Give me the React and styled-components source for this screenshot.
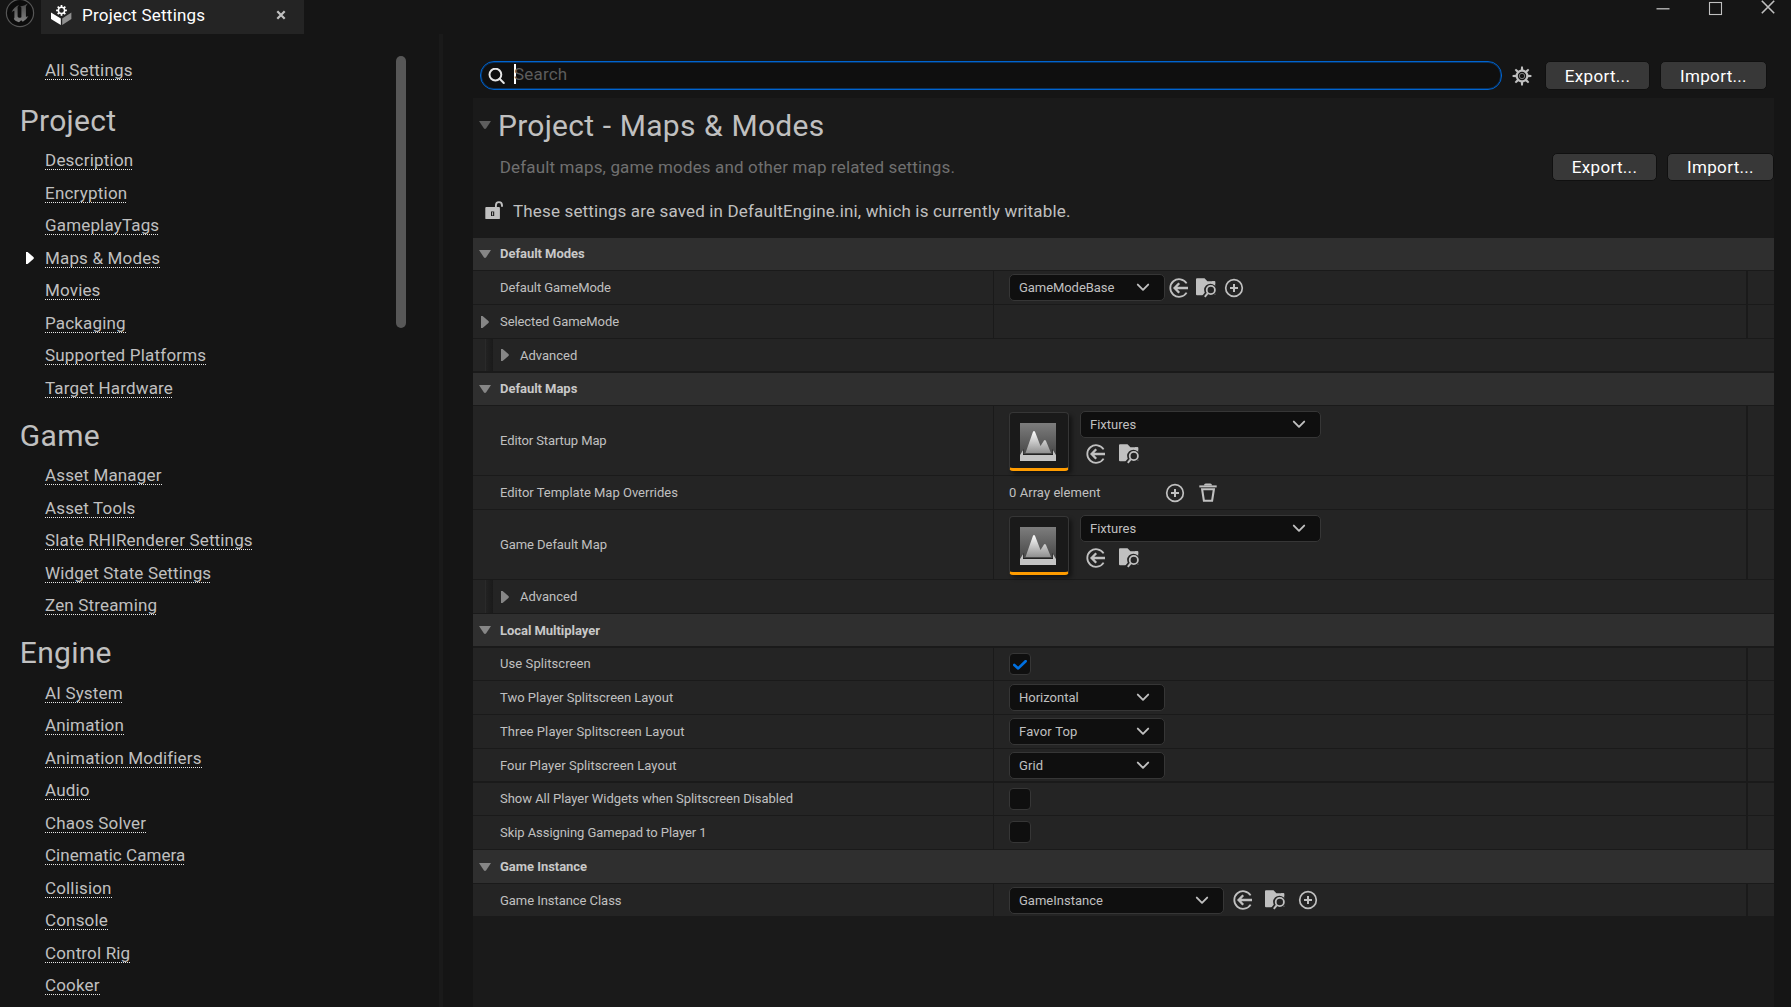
import React from "react";
import styled, { createGlobalStyle } from "styled-components";

const Global = createGlobalStyle`
  html, body { margin: 0; padding: 0; background: #151515; }
  body { overflow: hidden; font-family: Roboto, "Liberation Sans", sans-serif; color: #c0c0c0; }
  *, *::before, *::after { box-sizing: border-box; }
  svg { display: block; flex: none; }
`;

const Window = styled.div`
  display: flex;
  flex-direction: column;
  width: 1791px;
  height: 1007px;
  background: #151515;
  overflow: hidden;
`;

/* ---------- title bar ---------- */

const TitleBar = styled.header`
  display: flex;
  flex: none;
  height: 34px;
`;

const LogoSlot = styled.div`
  width: 41px;
  padding: 0 0 0 5px;
  overflow: hidden;
`;

const Tab = styled.div`
  display: flex;
  width: 263px;
  height: 34px;
  padding: 5px 18px 0 10px;
  background: #242424;
`;

const TabTitle = styled.span`
  flex: 1;
  padding-left: 10px;
  font-size: 17px;
  line-height: 20px;
  letter-spacing: 0.22px;
  color: #ffffff;
`;

const WindowButtons = styled.div`
  display: flex;
  margin-left: auto;
  padding-right: 15px;
  gap: 38px;
`;

/* ---------- body ---------- */

const Body = styled.div`
  display: flex;
  flex: 1;
  min-height: 0;
`;

const Sidebar = styled.nav`
  display: flex;
  width: 439px;
  flex: none;
  overflow: hidden;
`;

const Categories = styled.div`
  width: 396px;
  padding-top: 26px;
`;

const Splitter = styled.div`
  width: 4px;
  flex: none;
  background: #1a1a1a;
`;

const ScrollThumb = styled.div`
  width: 10px;
  height: 272px;
  margin-top: 22px;
  border-radius: 5px;
  background: #575757;
`;

const GroupTitle = styled.h2`
  height: 55px;
  margin: 0;
  padding: 7.6px 0 0 19.8px;
  font-size: 30px;
  line-height: 35px;
  font-weight: 400;
  letter-spacing: 0.3px;
`;

const LinkRow = styled.div`
  display: flex;
  height: ${(p) => p.$height || 32.5}px;
  align-items: flex-start;
`;

const Marker = styled.div`
  width: 45px;
  padding: 4px 0 0 26px;
`;

const Link = styled.a`
  height: 20px;
  font-size: 17px;
  line-height: 20px;
  letter-spacing: ${(p) => p.$track ?? 0.16}px;
  white-space: nowrap;
  background: repeating-linear-gradient(90deg, #e8e8e8 0 1px, transparent 1px 2px) left bottom / 100% 1px no-repeat;
`;

const Main = styled.main`
  display: flex;
  flex-direction: column;
  width: 1301px;
  margin-left: 30px;
`;

const Toolbar = styled.div`
  display: flex;
  height: 64px;
  padding: 27px 0 0 7px;
  flex: none;
`;

const SearchBox = styled.div`
  display: flex;
  width: 1022px;
  height: 29px;
  padding: 2px 0 0 7px;
  border: 1px solid #0064d0;
  border-radius: 14px;
  background: #0f0f0f;
  box-shadow: inset 0 0 0 1px rgba(0, 100, 208, 0.4);
`;

const Caret = styled.i`
  width: 2px;
  height: 20px;
  margin: 0 0 0 8px;
  background: #ffffff;
`;

const Placeholder = styled.span`
  margin-left: -2px;
  font-size: 17px;
  line-height: 20px;
  letter-spacing: 0.2px;
  color: #5c5c5c;
`;

const GearSlot = styled.div`
  padding: 5px 13px 0 10px;
`;

const Button = styled.button`
  width: ${(p) => p.$width}px;
  height: ${(p) => p.$height}px;
  margin: 0;
  padding: 0;
  border: 1px solid #101010;
  border-radius: 5px;
  background: #383838;
  font: 400 17px/20px Roboto, sans-serif;
  letter-spacing: 0.32px;
  color: #ffffff;
  & + & { margin-left: 10px; }
`;

const Panel = styled.section`
  flex: 1;
  background: #1a1a1a;
`;

const PanelTop = styled.div`
  height: 140px;
  padding-top: 10px;
`;

const PanelHeading = styled.div`
  display: flex;
  height: 45px;
`;

const TriangleSlot = styled.span`
  width: 25px;
  padding: ${(p) => p.$top || 0}px 0 0 6px;
`;

const PanelTitle = styled.h1`
  margin: 0;
  font-size: 30px;
  line-height: 35px;
  font-weight: 400;
  letter-spacing: 0.25px;
  word-spacing: 0.8px;
`;

const Description = styled.div`
  display: flex;
  height: 28px;
  padding-left: 26.8px;
`;

const DescriptionText = styled.p`
  flex: 1;
  margin: 4px 0 0;
  font-size: 17px;
  line-height: 20px;
  letter-spacing: 0.14px;
  color: #707070;
`;

const FileNote = styled.div`
  display: flex;
  gap: 9px;
  padding: 20px 0 0 12px;
  font-size: 17px;
  line-height: 20px;
  letter-spacing: 0.155px;
`;

/* ---------- details table ---------- */

const SectionHeader = styled.div`
  display: flex;
  height: ${(p) => p.$h + p.$gap}px;
  padding: 0 0 ${(p) => p.$lift}px 6px;
  border-bottom: ${(p) => p.$gap}px solid #1a1a1a;
  background: #2f2f2f;
  font-size: 13px;
  line-height: 15px;
  font-weight: 700;
  align-items: center;
  color: #c8c8c8;
`;

const HeaderLabel = styled.span`
  margin-left: 9px;
  letter-spacing: -0.04px;
`;

const HeaderArrow = styled.span`
  width: 12px;
`;

const RowBox = styled.div`
  display: grid;
  grid-template-columns: 520px 753px 28px;
  height: ${(p) => p.$h + p.$gap}px;
  border-bottom: ${(p) => p.$gap}px solid #1a1a1a;
  background: #242424;
`;

const NameCell = styled.div`
  display: flex;
  align-items: center;
  padding-bottom: ${(p) => p.$lift || 0}px;
  font-size: 13px;
  line-height: 15px;
  letter-spacing: ${(p) => p.$track || 0}px;
`;

const ExpanderSlot = styled.span`
  width: 27px;
  padding-left: 8px;
`;

const ValueCell = styled.div`
  display: flex;
  align-items: ${(p) => (p.$top ? "flex-start" : "center")};
  padding: ${(p) => p.$top || 0}px 0 0 15px;
  border-left: 1px solid #1a1a1a;
  font-size: 13px;
  line-height: 15px;
`;

const EndCell = styled.div`
  border-left: 2px solid #1a1a1a;
`;

const AdvancedRow = styled.div`
  display: flex;
  height: ${(p) => p.$h + p.$gap}px;
  border-bottom: ${(p) => p.$gap}px solid #1a1a1a;
  background: #242424;
  align-items: center;
  font-size: 13px;
  line-height: 15px;
`;

const Indent = styled.span`
  align-self: stretch;
  width: 20px;
  margin-right: 8px;
  background: linear-gradient(90deg, #242424 12px, #2a2a2a 12px, #2a2a2a 13px, #222222 13px, #1a1a1a 20px);
`;

const AdvancedLabel = styled.span`
  margin-left: 11px;
`;

const Combo = styled.div`
  display: flex;
  width: ${(p) => p.$width}px;
  height: 27px;
  padding: 0 14.5px 0 9px;
  flex: none;
  align-items: center;
  justify-content: space-between;
  border: 1px solid #363636;
  border-radius: 5px;
  background: #0f0f0f;
  letter-spacing: ${(p) => p.$track || 0}px;
`;

const IconRow = styled.div`
  display: flex;
  gap: ${(p) => p.$gap}px;
  margin: ${(p) => p.$margin || "0"};
`;

const AssetColumn = styled.div`
  margin-left: 11px;
`;

const Thumb = styled.div`
  width: 60px;
  height: 59px;
  margin-top: 1px;
  padding: 10px 0 0 10.4px;
  flex: none;
  border: 1px solid #363636;
  border-bottom: 3px solid #ff9c00;
  border-radius: 4px;
  background: #1a1a1a;
  box-shadow: 3px 3px 4px rgba(0, 0, 0, 0.45);
`;

const ArrayCount = styled.span`
  width: 156px;
  letter-spacing: 0.06px;
`;

const CheckFrame = styled.div`
  width: 22px;
  height: 22px;
  padding: 5.5px 0 0 3px;
  border: 1px solid #363636;
  border-radius: 4px;
  background: #0f0f0f;
`;

/* ---------- icons ---------- */

const Down = ({ color = "#868686" }) => (
  <svg width="12" height="8" viewBox="0 0 12 8"><path d="M0 0H12L7.2 7.2Q6 8.6 4.8 7.2Z" fill={color} /></svg>
);
const Right = ({ color = "#868686" }) => (
  <svg width="8" height="12" viewBox="0 0 8 12"><path d="M0 0L1.6 0L7.4 5Q8.3 6 7.4 7L1.6 12L0 12Z" fill={color} /></svg>
);
const Chevron = () => (
  <svg width="14" height="9" viewBox="0 0 14 9"><path d="M1.8 1.6L7 6.8L12.2 1.6" fill="none" stroke="#c0c0c0" strokeWidth="1.9" strokeLinecap="round" strokeLinejoin="round" /></svg>
);
const UseArrow = () => (
  <svg width="20" height="20" viewBox="0 0 20 20" fill="none" stroke="#c0c0c0" strokeWidth="1.8">
    <path d="M17.6 5.4A8.8 8.8 0 1 0 17.6 14.6" />
    <path d="M5.8 10H19M10.2 5.3L5.6 10L10.2 14.7" strokeWidth="2.3" />
  </svg>
);
const Browse = () => (
  <svg width="20" height="20" viewBox="0 0 20 20">
    <path d="M0 1.2Q0 .2 1 .2H8.5L11.4 3.2H18.2Q19.2 3.2 19.2 4.2V17.2H1Q0 17.2 0 16.2Z" fill="#c0c0c0" />
    <path d="M10.4 15.8L7 20M14.3 8.2V16" stroke="#242424" strokeWidth="4" />
    <circle cx="14.4" cy="12" r="6.3" fill="#242424" />
    <path d="M16 3.2H19.2V6H16Z" fill="#c0c0c0" />
    <path d="M13 17H20V20H13Z" fill="#242424" />
    <circle cx="14.8" cy="12" r="4.1" fill="none" stroke="#c0c0c0" strokeWidth="1.8" />
    <path d="M11.8 15.2L8.8 18.8" stroke="#c0c0c0" strokeWidth="2" />
  </svg>
);
const Plus = () => (
  <svg width="20" height="20" viewBox="0 0 20 20" fill="none" stroke="#c0c0c0">
    <circle cx="10" cy="10" r="8.3" strokeWidth="1.7" />
    <path d="M10 6V14M6 10H14" strokeWidth="2" />
  </svg>
);
const Trash = () => (
  <svg width="18" height="20" viewBox="0 0 18 20">
    <path d="M5 2.4Q5 .4 6.8 .4H11.2Q13 .4 13 2.4Z" fill="#c0c0c0" />
    <path d="M.3 3.4H17.7" stroke="#c0c0c0" strokeWidth="2" />
    <path d="M3.1 6.2L4.9 17.8H13.1L14.9 6.2Z" fill="none" stroke="#c0c0c0" strokeWidth="2.1" />
  </svg>
);
const Check = () => (
  <svg width="14" height="10" viewBox="0 0 14 10"><path d="M1.3 5L5.2 8.4L12.6 1.2" fill="none" stroke="#0070e0" strokeWidth="2.7" strokeLinecap="round" strokeLinejoin="round" /></svg>
);
const LevelArt = () => (
  <svg width="36" height="38" viewBox="0 0 36 38">
    <defs>
      <linearGradient id="sky" x1="0" y1="0" x2="0" y2="1"><stop offset="0" stopColor="#7d7d7d" /><stop offset="1" stopColor="#3c3c3c" /></linearGradient>
      <linearGradient id="peak" x1="0" y1="0" x2="0" y2="1"><stop offset="0" stopColor="#ffffff" /><stop offset="1" stopColor="#909090" /></linearGradient>
    </defs>
    <rect width="36" height="38" fill="url(#sky)" />
    <path d="M0 32L3.5 26V31H32.5V26L36 32V38H0Z" fill="#222222" />
    <path d="M5.5 30L12.8 9.2Q14 6.6 15.2 9.2L20.5 23L24 17.6Q25 16 26 18L31 30Z" fill="url(#peak)" />
    <path d="M0 32L3 27V32H33V27L36 32V38H0Z" fill="#c4c4c4" />
  </svg>
);
const teeth = [0, 45, 90, 135, 180, 225, 270, 315];
const Gear = () => (
  <svg width="20" height="20" viewBox="0 0 20 20">
    {teeth.map((a) => <path key={a} d="M8.7 4.6L9.1 .6H10.9L11.3 4.6Z" fill="#c0c0c0" transform={`rotate(${a} 10 10)`} />)}
    <circle cx="10" cy="10" r="5.3" fill="none" stroke="#c0c0c0" strokeWidth="2.2" />
    <circle cx="10" cy="10" r="2.7" fill="none" stroke="#7c7c7c" strokeWidth="1" />
  </svg>
);
const Magnifier = () => (
  <svg width="18" height="18" viewBox="0 0 18 18" fill="none" stroke="#e6e6e6" strokeWidth="2">
    <circle cx="7.4" cy="6.6" r="5.9" /><path d="M11.6 10.8L15.8 15" strokeLinecap="round" />
  </svg>
);
const Unlock = () => (
  <svg width="19" height="19" viewBox="0 0 19 19">
    <path d="M10.9 7V4.4Q10.9 1.1 13.9 1.1Q17 1.1 17 4.4V5.8" fill="none" stroke="#c0c0c0" strokeWidth="1.9" />
    <path d="M.3 7Q.3 6.1 1.2 6.1H14Q14.9 6.1 14.9 7V17.2Q14.9 18.1 14 18.1H1.2Q.3 18.1 .3 17.2ZM6 10.4V15H9.2V10.4Z" fill="#c0c0c0" fillRule="evenodd" />
    <path d="M7.6 11.2V14.4" stroke="#c0c0c0" strokeWidth="1" />
  </svg>
);
const ProjectIcon = () => (
  <svg width="21" height="21" viewBox="0 0 21 21">
    <path d="M0 7.6L9.8 13.6V20L0 14Z" fill="#ffffff" />
    <path d="M20.4 7.6L11.2 13.4V20L20.4 14Z" fill="#8f8f8f" />
    {teeth.map((a) => <path key={a} d="M10.5 0V2.6" stroke="#ffffff" strokeWidth="1.7" transform={`rotate(${a} 10.5 5.4)`} />)}
    <circle cx="10.5" cy="5.4" r="3.1" fill="#242424" stroke="#ffffff" strokeWidth="1.5" />
  </svg>
);
const EngineLogo = () => (
  <svg width="30" height="28" viewBox="0 0 30 28">
    <defs>
      <linearGradient id="metal" x1="0" y1="0" x2="0" y2="1"><stop offset="0" stopColor="#4a4a4a" /><stop offset="1" stopColor="#828282" /></linearGradient>
    </defs>
    <circle cx="15" cy="13" r="13.6" fill="#0c0c0c" stroke="#565656" strokeWidth="1.2" />
    <path d="M6.6 12.4Q8.4 7 14 4.9L12.6 7V16.6Q13.6 18.6 16.4 17.2V7.4L15.2 6.4Q19.4 6 22.8 3.6L20.9 6.6V16.4Q21.8 17.2 23.4 16Q21.6 19.8 17.8 21.8L16.2 20.2L14 22.2Q9.6 21.2 8.8 18.8Q9.4 18.6 9.4 17.6V10.8Q8 10.4 6.6 12.4Z" fill="url(#metal)" />
  </svg>
);
const CloseSmall = () => (
  <svg width="10" height="10" viewBox="0 0 10 10"><path d="M1.3 1.3L8.7 8.7M8.7 1.3L1.3 8.7" stroke="#c0c0c0" strokeWidth="2.2" /></svg>
);

/* ---------- data ---------- */

const groups = [
  { title: "Project", items: ["Description", "Encryption", "GameplayTags", "Maps & Modes", "Movies", "Packaging", "Supported Platforms", "Target Hardware"] },
  { title: "Game", items: ["Asset Manager", "Asset Tools", "Slate RHIRenderer Settings", "Widget State Settings", "Zen Streaming"] },
  { title: "Engine", items: ["AI System", "Animation", "Animation Modifiers", "Audio", "Chaos Solver", "Cinematic Camera", "Collision", "Console", "Control Rig", "Cooker"] },
];

const linkTracking = { "Cinematic Camera": 0.05, "Supported Platforms": 0.2, "Description": 0.22, "Encryption": 0.22 };

/* ---------- pieces ---------- */

const Select = ({ width, value, track }) => (
  <Combo $width={width} $track={track}><span>{value}</span><Chevron /></Combo>
);

const Header = ({ label, h = 32, gap = 1, lift = 0 }) => (
  <SectionHeader $h={h} $gap={gap} $lift={lift}>
    <HeaderArrow><Down /></HeaderArrow>
    <HeaderLabel>{label}</HeaderLabel>
  </SectionHeader>
);

const Row = ({ label, h = 33, gap = 1, top, lift, track, expandable, children }) => (
  <RowBox $h={h} $gap={gap}>
    <NameCell $lift={lift} $track={track}><ExpanderSlot>{expandable && <Right />}</ExpanderSlot>{label}</NameCell>
    <ValueCell $top={top}>{children}</ValueCell>
    <EndCell />
  </RowBox>
);

const Advanced = ({ h, gap }) => (
  <AdvancedRow $h={h} $gap={gap}><Indent /><Right /><AdvancedLabel>Advanced</AdvancedLabel></AdvancedRow>
);

const AssetPicker = ({ value }) => (
  <>
    <Thumb><LevelArt /></Thumb>
    <AssetColumn>
      <Select width={241} value={value} />
      <IconRow $gap={13} $margin="6px 0 0 6px"><UseArrow /><Browse /></IconRow>
    </AssetColumn>
  </>
);

const CheckBox = ({ checked }) => <CheckFrame>{checked && <Check />}</CheckFrame>;

export default function App() {
  return (
    <Window>
      <Global />
      <TitleBar>
        <LogoSlot><EngineLogo /></LogoSlot>
        <Tab>
          <ProjectIcon />
          <TabTitle>Project Settings</TabTitle>
          <IconRow $margin="5px 0 0 0"><CloseSmall /></IconRow>
        </Tab>
        <WindowButtons>
          <svg width="15" height="16" viewBox="0 0 15 16"><path d="M1.5 8.8H14.5" stroke="#c0c0c0" strokeWidth="1.3" /></svg>
          <svg width="15" height="16" viewBox="0 0 15 16"><rect x="1.5" y="2.5" width="12" height="12" fill="none" stroke="#c0c0c0" strokeWidth="1.1" /></svg>
          <svg width="15" height="16" viewBox="0 0 15 16"><path d="M.8 .8L13.2 13.2M13.2 .8L.8 13.2" stroke="#c0c0c0" strokeWidth="1.6" /></svg>
        </WindowButtons>
      </TitleBar>
      <Body>
        <Sidebar>
          <Categories>
            <LinkRow $height={35}><Marker /><Link>All Settings</Link></LinkRow>
            {groups.map((g) => (
              <React.Fragment key={g.title}>
                <GroupTitle>{g.title}</GroupTitle>
                {g.items.map((t) => (
                  <LinkRow key={t}>
                    <Marker>{t === "Maps & Modes" && <Right color="#ffffff" />}</Marker>
                    <Link $track={linkTracking[t]}>{t}</Link>
                  </LinkRow>
                ))}
              </React.Fragment>
            ))}
          </Categories>
          <ScrollThumb />
        </Sidebar>
        <Splitter />
        <Main>
          <Toolbar>
            <SearchBox>
              <IconRow $margin="4px 0 0 0"><Magnifier /></IconRow>
              <Caret />
              <Placeholder>Search</Placeholder>
            </SearchBox>
            <GearSlot><Gear /></GearSlot>
            <Button $width={105} $height={29}>Export...</Button>
            <Button $width={107} $height={29}>Import...</Button>
          </Toolbar>
          <Panel>
            <PanelTop>
              <PanelHeading>
                <TriangleSlot $top={13}><Down color="#5e5e5e" /></TriangleSlot>
                <PanelTitle>Project - Maps &amp; Modes</PanelTitle>
              </PanelHeading>
              <Description>
                <DescriptionText>Default maps, game modes and other map related settings.</DescriptionText>
                <Button $width={105} $height={28}>Export...</Button>
                <Button $width={107} $height={28}>Import...</Button>
              </Description>
              <FileNote><Unlock />These settings are saved in DefaultEngine.ini, which is currently writable.</FileNote>
            </PanelTop>

            <Header label="Default Modes" lift={1} />
            <Row label="Default GameMode" track={-0.07}>
              <Select width={156} value="GameModeBase" track={-0.06} />
              <IconRow $gap={8} $margin="0 0 0 3.5px"><UseArrow /><IconRow $margin="0 0 0 -1px"><Browse /></IconRow><Plus /></IconRow>
            </Row>
            <Row label="Selected GameMode" track={-0.08} expandable />
            <Advanced h={32} gap={2} />

            <Header label="Default Maps" lift={1} />
            <Row label="Editor Startup Map" h={69} top={5} track={-0.1}><AssetPicker value="Fixtures" /></Row>
            <Row label="Editor Template Map Overrides">
              <ArrayCount>0 Array element</ArrayCount>
              <IconRow $gap={14}><Plus /><Trash /></IconRow>
            </Row>
            <Row label="Game Default Map" h={69} top={5} track={-0.07}><AssetPicker value="Fixtures" /></Row>
            <Advanced h={33} gap={1} />

            <Header label="Local Multiplayer" gap={2} />
            <Row label="Use Splitscreen" h={32} lift={1} track={0.08}><CheckBox checked /></Row>
            <Row label="Two Player Splitscreen Layout"><Select width={156} value="Horizontal" /></Row>
            <Row label="Three Player Splitscreen Layout" track={0.1}><Select width={156} value="Favor Top" track={0.2} /></Row>
            <Row label="Four Player Splitscreen Layout" h={32} gap={2} track={0.06}><Select width={156} value="Grid" track={0.1} /></Row>
            <Row label="Show All Player Widgets when Splitscreen Disabled" h={32} lift={1} track={-0.03}><CheckBox /></Row>
            <Row label="Skip Assigning Gamepad to Player 1" top={5} track={-0.06}><CheckBox /></Row>

            <Header label="Game Instance" h={33} />
            <Row label="Game Instance Class" h={32} gap={0} track={-0.05}>
              <Select width={215} value="GameInstance" />
              <IconRow $gap={12.5} $margin="0 0 0 8.6px"><UseArrow /><Browse /><Plus /></IconRow>
            </Row>
          </Panel>
        </Main>
      </Body>
    </Window>
  );
}
